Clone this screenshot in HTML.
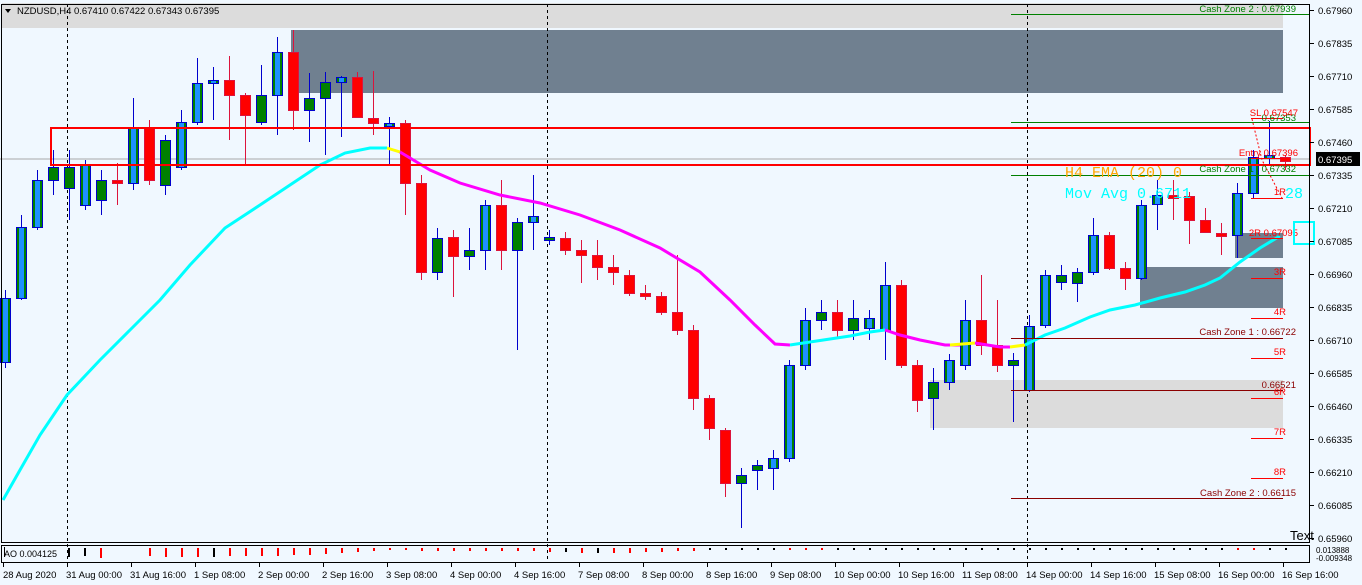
<!DOCTYPE html>
<html><head><meta charset="utf-8"><style>
html,body{margin:0;padding:0;background:#f0f8ff;width:1362px;height:585px;overflow:hidden}
svg{display:block}
text{font-family:"Liberation Sans",sans-serif}
text.m{font-family:"Liberation Mono",monospace}
</style></head><body>
<svg id="s" width="1362" height="585" xmlns="http://www.w3.org/2000/svg">
<rect x="0" y="0" width="1362" height="585" fill="#f0f8ff"/>
<rect x="2" y="3" width="1281" height="25" fill="#dcdcdc"/>
<rect x="291" y="30" width="992" height="63" fill="#708090"/>
<rect x="930" y="380" width="353" height="48" fill="#dcdcdc"/>
<rect x="1140" y="267" width="143" height="41" fill="#708090"/>
<rect x="1235" y="233" width="48" height="25" fill="#708090"/>
<g id="grid"></g>
<line x1="0" y1="159" x2="1310" y2="159" stroke="#a9a9a9" stroke-width="1"/>
<g stroke-dasharray="3,3" stroke="#000" stroke-width="1">
<line x1="67.5" y1="4" x2="67.5" y2="563"/><line x1="547.5" y1="4" x2="547.5" y2="563"/><line x1="1027.5" y1="4" x2="1027.5" y2="563"/>
</g>
<g id="c"></g>
<g id="ema" fill="none" stroke-width="3"></g>
<rect x="51" y="128" width="1259" height="37" fill="none" stroke="#ff0000" stroke-width="2"/>
<g stroke-width="1">
<line x1="1011" y1="14.5" x2="1310" y2="14.5" stroke="#008000"/>
<line x1="1011" y1="122.5" x2="1310" y2="122.5" stroke="#008000"/>
<line x1="1011" y1="175.5" x2="1310" y2="175.5" stroke="#008000"/>
<line x1="1011" y1="338.5" x2="1283" y2="338.5" stroke="#8b0000"/>
<line x1="1011" y1="390.5" x2="1283" y2="390.5" stroke="#8b0000"/>
<line x1="1011" y1="498.5" x2="1283" y2="498.5" stroke="#8b0000"/>
<line x1="1251" y1="118.5" x2="1283" y2="118.5" stroke="#ff0000"/>
<line x1="1251" y1="158.5" x2="1283" y2="158.5" stroke="#ff0000"/>
<polyline points="1252,119 1262,160 1282,198" fill="none" stroke="#ff0000" stroke-dasharray="2,2"/>
</g>
<g id="r" stroke="#ff0000"></g>
<g font-size="9.5" fill="#008000" text-anchor="end">
<text x="1296" y="12">Cash Zone 2 : 0.67939</text>
<text x="1296" y="172">Cash Zone 1 : 0.67332</text>
<text x="1296" y="121">0.67353</text>
</g>
<g font-size="9.5" fill="#ff0000" text-anchor="end">
<text x="1298" y="116">SL 0.67547</text>
<text x="1298" y="156">Entry 0.67396</text>
<text x="1298" y="236">2R 0.67095</text>
</g>
<g font-size="9.5" fill="#8b0000" text-anchor="end">
<text x="1296" y="335">Cash Zone 1 : 0.66722</text>
<text x="1296" y="388">0.66521</text>
<text x="1296" y="496">Cash Zone 2 : 0.66115</text>
</g>
<text class="m" x="1065" y="177" font-size="15" fill="#ffa500">H4 EMA (20) 0</text>
<text class="m" x="1065" y="198" font-size="15" fill="#00ffff">Mov Avg   0.6711</text>
<text class="m" x="1285" y="198" font-size="15" fill="#00ffff">28</text>
<rect x="1294" y="222" width="20" height="22" fill="none" stroke="#00ffff" stroke-width="2"/>
<text x="1290" y="540" font-size="13" fill="#000">Text</text>
<rect x="1.5" y="4.5" width="1308" height="538" fill="none" stroke="#000"/>
<rect x="1.5" y="545.5" width="1308" height="17" fill="none" stroke="#000"/>
<text x="4" y="557" font-size="9" fill="#000">AO 0.004125</text>
<g id="ao"></g>
<g id="ax" font-size="9.5" fill="#000"></g>
<rect x="1316" y="152" width="44" height="14" fill="#000"/>
<text x="1318" y="163" font-size="9.5" fill="#fff">0.67395</text>
<rect x="4" y="6" width="11" height="10" fill="#dcdcdc"/>
<path d="M5,9 L11,9 L8,13 Z" fill="#000"/>
<text x="17" y="14" font-size="9.5" fill="#000">NZDUSD,H4  0.67410 0.67422 0.67343 0.67395</text>
</svg>
<script>
var NS="http://www.w3.org/2000/svg";
function el(p,t,a,txt){var e=document.createElementNS(NS,t);for(var k in a)e.setAttribute(k,a[k]);if(txt)e.textContent=txt;document.getElementById(p).appendChild(e);return e;}
var C=[[298,362,290,368,'b'],[227,298,215,300,'b'],[180,227,170,230,'b'],[167,180,150,195,'g'],[167,188,150,220,'g'],[165,205,160,210,'b'],[180,200,170,215,'g'],[180,183,163,205,'r'],[128,183,98,190,'b'],[128,180,120,185,'r'],[140,185,135,195,'g'],[122,167,110,170,'b'],[83,122,58,125,'b'],[80,82,67,120,'b'],[80,95,56,140,'r'],[95,115,93,165,'r'],[95,122,65,125,'g'],[52,95,37,135,'b'],[52,110,30,130,'r'],[98,110,73,142,'g'],[82,98,72,155,'g'],[77,82,76,137,'b'],[77,117,72,118,'r'],[118,123,71,135,'r'],[123,126,117,165,'b'],[123,183,120,215,'r'],[183,272,175,280,'r'],[238,272,228,280,'g'],[237,256,230,297,'r'],[250,256,228,270,'g'],[205,250,200,270,'b'],[205,250,180,270,'r'],[222,250,218,350,'g'],[216,222,175,250,'b'],[237,240,230,245,'g'],[238,250,232,255,'r'],[250,255,240,283,'r'],[255,267,240,280,'r'],[267,272,255,285,'r'],[275,293,270,296,'r'],[293,296,285,300,'r'],[296,312,292,315,'r'],[312,330,255,335,'r'],[330,398,325,410,'r'],[398,428,395,440,'r'],[430,483,428,497,'r'],[475,483,468,528,'g'],[465,470,460,490,'g'],[458,468,450,490,'b'],[365,458,360,462,'b'],[320,365,308,370,'b'],[312,320,300,330,'g'],[312,330,300,338,'r'],[318,330,300,340,'g'],[318,328,310,340,'b'],[285,330,262,360,'b'],[285,365,280,368,'r'],[365,400,360,412,'r'],[382,398,368,430,'g'],[360,382,354,390,'b'],[320,365,300,370,'b'],[320,345,275,355,'r'],[345,365,300,372,'r'],[360,365,353,422,'g'],[326,390,315,392,'b'],[275,325,270,328,'b'],[275,282,265,290,'g'],[272,283,268,302,'g'],[235,272,218,275,'b'],[235,268,232,270,'r'],[268,278,262,290,'r'],[205,278,200,280,'b'],[195,204,180,230,'b'],[195,197,180,220,'r'],[196,220,192,244,'r'],[220,232,208,232,'r'],[233,235,223,255,'r'],[193,235,183,258,'b'],[157,193,150,198,'b'],[155,158,121,165,'b'],[157,161,155,170,'r']];
C.forEach(function(c,i){var x=5+i*16;var t=c[4];var wc=(t=='r')?'#dc143c':'#0000cd';
el('c','line',{x1:x+.5,y1:c[2],x2:x+.5,y2:c[3],stroke:wc});
var h=Math.max(c[1]-c[0],3);
if(t=='r'){el('c','rect',{x:x-4.5,y:c[0]+.5,width:10,height:h,fill:'#ff0000',stroke:'#dc143c'});}
else if(t=='g'){el('c','rect',{x:x-4.5,y:c[0]+.5,width:10,height:h,fill:'#008000',stroke:'#0000cd'});}
else{el('c','rect',{x:x-4.5,y:c[0]+.5,width:10,height:h,fill:'#008000',stroke:'#0000cd'});el('c','rect',{x:x-2,y:c[0]+1,width:5,height:h-1,fill:'#1e90ff'});}
});
el('ema','polyline',{stroke:'#00ffff',points:'3,500 20,470 40,435 67,395 100,360 130,330 160,300 190,265 225,228 260,205 290,185 320,165 345,153 370,148 387,148'});
el('ema','polyline',{stroke:'#ffff00',points:'387,148 400,152'});
el('ema','polyline',{stroke:'#ff00ff',points:'400,152 430,170 460,183 500,195 540,203 580,215 620,230 660,248 700,272 730,300 755,325 775,344 790,345'});
el('ema','polyline',{stroke:'#00ffff',points:'790,345 810,342 830,339 850,336 870,332 885,330'});
el('ema','polyline',{stroke:'#ff00ff',points:'885,330 900,335 920,340 945,345 960,345'});
el('ema','polyline',{stroke:'#ffff00',points:'950,345 975,343'});
el('ema','polyline',{stroke:'#ff00ff',points:'975,343 1000,347 1010,347'});
el('ema','polyline',{stroke:'#ffff00',points:'1010,347 1025,345'});
el('ema','polyline',{stroke:'#00ffff',points:'1025,345 1045,335 1065,328 1090,317 1110,310 1135,305 1160,298 1185,292 1205,285 1220,278 1240,262 1260,248 1280,236'});
[['1R',198],['3R',278],['4R',318],['5R',358],['6R',398],['7R',438],['8R',478]].forEach(function(r){el('r','line',{x1:1251,y1:r[1]+.5,x2:1283,y2:r[1]+.5,stroke:'#ff0000'});el('r','text',{x:1286,y:r[1]-3,'font-size':'9.5',fill:'#ff0000',stroke:'none','text-anchor':'end'},r[0]);});
el('r','line',{x1:1251,y1:238.5,x2:1283,y2:238.5,stroke:'#ff0000'});
C.forEach(function(c,i){var x=5+i*16;if(i<9)return;var h=[8,9,9,9,9,8,8,8,8,7,7,6,5,4,3,2,2,3,3,3,3,3,3,3,3,4,4,5,5,5,5,4,4,3,3,2,2,2,2,2,2,2,2,2,2,2,2,2,2,2,2,2,2,2,2,2,2,2,2,2,2,2,2,2,2,2,2,2,2,2,2,2,2][i-9]||2;var col=(i==13||i==35||i==37||i>=44&&i<=48||i>=52)?'#000':'#ff0000';if(i==77||i==78)col='#ff0000';el('ao','rect',{x:x,y:548,width:2,height:h,fill:col});});
el('ao','rect',{x:4,y:547,width:1,height:10,fill:'#000'});
[51,67,83].forEach(function(x,j){el('ao','rect',{x:x+17,y:548,width:2,height:[9,8,10][j],fill:['#000','#000','#ff0000'][j]});});
for(var k=0;k<17;k++){var y=10+k*33;var p=(0.6796-k*0.00125).toFixed(5);el('ax','line',{x1:1310,y1:y+.5,x2:1314,y2:y+.5,stroke:'#000'});el('ax','text',{x:1318,y:y+4},p);}
el('ax','text',{x:1316,y:553,'font-size':'8'},'0.013888');
el('ax','text',{x:1316,y:561,'font-size':'8'},'-0.009348');
var T=['28 Aug 2020','31 Aug 00:00','31 Aug 16:00','1 Sep 08:00','2 Sep 00:00','2 Sep 16:00','3 Sep 08:00','4 Sep 00:00','4 Sep 16:00','7 Sep 08:00','8 Sep 00:00','8 Sep 16:00','9 Sep 08:00','10 Sep 00:00','10 Sep 16:00','11 Sep 08:00','14 Sep 00:00','14 Sep 16:00','15 Sep 08:00','16 Sep 00:00','16 Sep 16:00'];
T.forEach(function(t,i){var x=i*64+3;el('ax','line',{x1:x+.5,y1:563,x2:x+.5,y2:567,stroke:'#000'});el('ax','text',{x:i==0?x:x-1,y:578},t);});
</script>
</body></html>
